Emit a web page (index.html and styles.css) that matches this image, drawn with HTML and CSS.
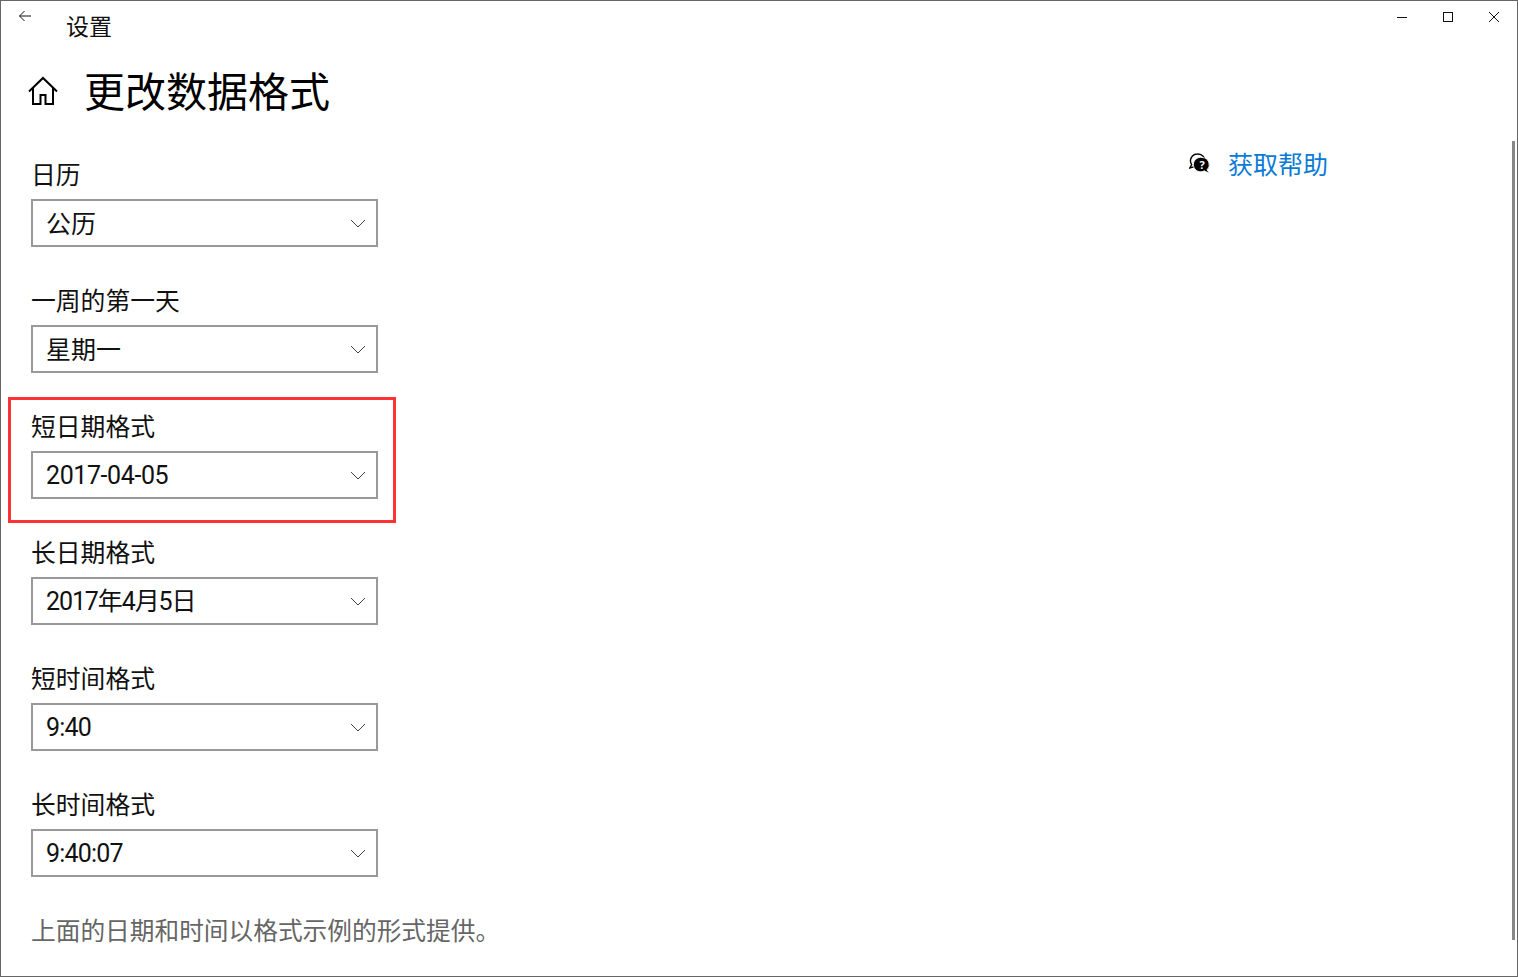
FILE: index.html
```html
<!DOCTYPE html>
<html lang="zh-CN">
<head>
<meta charset="utf-8">
<title>设置</title>
<link rel="stylesheet" href="styles.css">
</head>
<body>
<div class="window">
  <header class="titlebar">
    <div class="titlebar-left">
      <svg class="back" width="16" height="12" viewBox="0 0 16 12"><path d="M6.500 1 1.500 6l5 5M1.500 6H13" fill="none" stroke="#111" stroke-width="1"/></svg>
      <span class="app-name">设置</span>
    </div>
    <div class="controls">
      <svg width="12" height="12" viewBox="0 0 12 12"><path d="M1 6.500h10" stroke="#111" stroke-width="1"/></svg>
      <svg width="12" height="12" viewBox="0 0 12 12"><rect x="1.500" y="1.500" width="9" height="9" fill="none" stroke="#111" stroke-width="1"/></svg>
      <svg width="12" height="12" viewBox="0 0 12 12"><path d="M1 1l10 10M11 1 1 11" stroke="#111" stroke-width="1" fill="none"/></svg>
    </div>
  </header>
  <div class="heading">
    <svg class="home" width="30" height="30" viewBox="0 0 30 30"><path d="M1 15.500 15 2l14 13.500M5 12v16h7.500v-9h5v9H25V12" fill="none" stroke="#000" stroke-width="2"/></svg>
    <h1>更改数据格式</h1>
  </div>
  <main class="content">
    <div class="form">
      <section class="field"><label>日历</label><div class="select"><span>公历</span><svg class="chev" width="16" height="9" viewBox="0 0 16 9"><path d="M1 1l7 7 7-7" fill="none" stroke="#444" stroke-width="1"/></svg></div></section>
      <section class="field"><label>一周的第一天</label><div class="select"><span>星期一</span><svg class="chev" width="16" height="9" viewBox="0 0 16 9"><path d="M1 1l7 7 7-7" fill="none" stroke="#444" stroke-width="1"/></svg></div></section>
      <section class="field"><label>短日期格式</label><div class="select"><span class="latin">2017-04-05</span><svg class="chev" width="16" height="9" viewBox="0 0 16 9"><path d="M1 1l7 7 7-7" fill="none" stroke="#444" stroke-width="1"/></svg></div></section>
      <section class="field"><label>长日期格式</label><div class="select"><span class="latin mixed">2017年4月5日</span><svg class="chev" width="16" height="9" viewBox="0 0 16 9"><path d="M1 1l7 7 7-7" fill="none" stroke="#444" stroke-width="1"/></svg></div></section>
      <section class="field"><label>短时间格式</label><div class="select"><span class="latin time">9:40</span><svg class="chev" width="16" height="9" viewBox="0 0 16 9"><path d="M1 1l7 7 7-7" fill="none" stroke="#444" stroke-width="1"/></svg></div></section>
      <section class="field"><label>长时间格式</label><div class="select"><span class="latin time">9:40:07</span><svg class="chev" width="16" height="9" viewBox="0 0 16 9"><path d="M1 1l7 7 7-7" fill="none" stroke="#444" stroke-width="1"/></svg></div></section>
      <p class="note">上面的日期和时间以格式示例的形式提供。</p>
    </div>
    <aside class="help">
      <svg width="21" height="21" viewBox="0 0 21 21"><path d="M8.500 1a7 6.800 0 0 0-5.800 10.600L.8 15l4.700-1.300A7 6.800 0 1 0 8.500 1z" fill="#fff" stroke="#000" stroke-width="1.400"/><path d="M13 4.500a7.200 7.200 0 0 1 5 12.400l2.500 3.600-5.300-2.700A7.200 7.200 0 1 1 13 4.500z" fill="#000" stroke="#fff" stroke-width=".8"/><text x="13" y="16" class="q">?</text></svg>
      <a class="help-link">获取帮助</a>
    </aside>
  </main>
  <div class="scrollbar"></div>
  <div class="highlight"></div>
</div>
</body>
</html>
```
FILE: styles.css
```css
* { box-sizing: border-box; }
html, body { margin: 0; padding: 0; background: #fff; }
body {
  font-family: "Noto Sans CJK SC", sans-serif;
  color: #000;
  overflow: hidden;
}
.window {
  position: relative;
  width: 1518px;
  height: 977px;
  border: 1px solid #666;
  background: #fff;
  overflow: hidden;
}
.titlebar {
  display: flex;
  justify-content: space-between;
  align-items: flex-start;
  height: 47px;
}
.titlebar-left { display: flex; align-items: flex-start; }
.back { margin: 9px 0 0 17px; }
.app-name {
  margin: 8px 0 0 32px;
  font-size: 23px;
  line-height: 32px;
  color: #111;
}
.controls {
  display: flex;
  gap: 34px;
  padding: 10px 17px 0 0;
}
.heading {
  display: flex;
  align-items: center;
  height: 72px;
  padding: 14px 0 0 27px;
}
.home { flex: none; }
h1 {
  margin: -4px 0 0 26px;
  font-size: 41px;
  font-weight: 400;
  line-height: 56px;
}
.content {
  display: flex;
  padding: 25px 0 0 30px;
}
.form { width: 347px; }
.field { height: 126px; padding-top: 11px; }
.field label {
  display: block;
  height: 35px;
  font-size: 24.800px;
  line-height: 35px;
  white-space: nowrap;
  color: #111;
}
.select {
  display: flex;
  align-items: center;
  justify-content: space-between;
  height: 48px;
  margin-top: 8px;
  padding: 0 10px 2px 13px;
  border: 2px solid #999;
  font-size: 25px;
  line-height: 44px;
  color: #111;
}
.chev { margin-top: 2px; }
.latin {
  padding-top: 4px;
  font-family: Roboto, "Noto Sans CJK SC", sans-serif;
  letter-spacing: -0.4px;
}
.mixed { letter-spacing: -1.100px; }
.time { letter-spacing: -0.8px; }
.note {
  margin: 0;
  padding-top: 11px;
  font-size: 24.700px;
  line-height: 35px;
  white-space: nowrap;
  color: #666;
}
.help {
  display: flex;
  align-items: center;
  gap: 18px;
  height: 36px;
  margin: 0 0 0 811px;
}
.q { font-size: 11px; font-weight: 700; fill: #fff; text-anchor: middle; font-family: "Open Sans", sans-serif; }
.help-link {
  font-size: 25px;
  line-height: 36px;
  color: #0a7ad6;
  white-space: nowrap;
}
.scrollbar {
  position: absolute;
  right: 2px;
  top: 140px;
  width: 3px;
  height: 799px;
  background: #888;
}
.highlight {
  position: absolute;
  left: 7px;
  top: 396px;
  width: 388px;
  height: 126px;
  border: 3px solid #f33;
  pointer-events: none;
}
```
